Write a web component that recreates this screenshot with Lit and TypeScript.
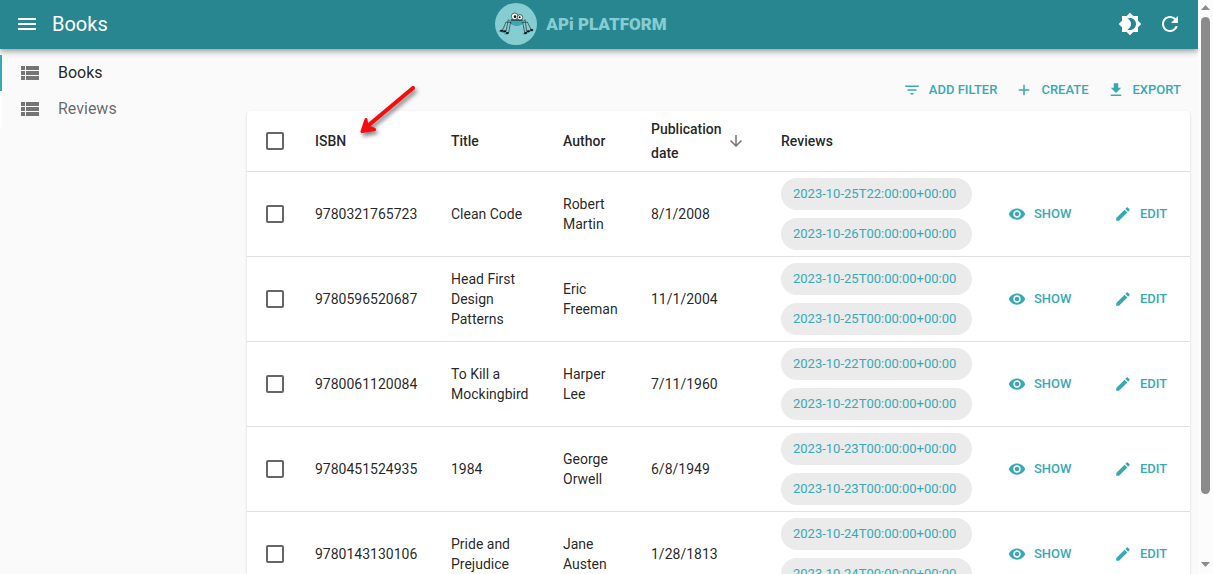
import { LitElement, html, css, svg } from "lit";
import { customElement, property } from "lit/decorators.js";

const ICONS: Record<string, string> = {
  menu: "M3 18h18v-2H3v2zm0-5h18v-2H3v2zm0-7v2h18V6H3z",
  theme:
    "M20 8.69V4h-4.69L12 .69 8.69 4H4v4.69L.69 12 4 15.31V20h4.69L12 23.31 15.31 20H20v-4.69L23.31 12 20 8.69zM12 18c-.89 0-1.74-.2-2.5-.55C11.56 16.5 13 14.42 13 12s-1.44-4.5-3.5-5.45C10.26 6.2 11.11 6 12 6c3.31 0 6 2.69 6 6s-2.69 6-6 6z",
  refresh:
    "M17.65 6.35C16.2 4.9 14.21 4 12 4c-4.42 0-7.99 3.58-7.99 8s3.57 8 7.99 8c3.73 0 6.84-2.55 7.73-6h-2.08c-.82 2.33-3.04 4-5.65 4-3.31 0-6-2.69-6-6s2.69-6 6-6c1.66 0 3.14.69 4.22 1.78L13 11h7V4l-2.35 2.35z",
  list: "M3 14h4v-4H3v4zm0 5h4v-4H3v4zM3 9h4V5H3v4zm5 5h13v-4H8v4zm0 5h13v-4H8v4zM8 5v4h13V5H8z",
  filter: "M10 18h4v-2h-4v2zM3 6v2h18V6H3zm3 7h12v-2H6v2z",
  add: "M19 13h-6v6h-2v-6H5v-2h6V5h2v6h6v2z",
  download: "M19 9h-4V3H9v6H5l7 7 7-7zM5 18v2h14v-2H5z",
  arrowDown: "M20 12l-1.41-1.41L13 16.17V4h-2v12.17l-5.58-5.59L4 12l8 8 8-8z",
  show: "M12 4.5C7 4.5 2.73 7.61 1 12c1.73 4.39 6 7.5 11 7.5s9.27-3.11 11-7.5c-1.73-4.39-6-7.5-11-7.5zM12 17c-2.76 0-5-2.24-5-5s2.24-5 5-5 5 2.24 5 5-2.24 5-5 5zm0-8c-1.66 0-3 1.34-3 3s1.34 3 3 3 3-1.34 3-3-1.34-3-3-3z",
  edit: "M3 17.25V21h3.75L17.81 9.94l-3.75-3.75L3 17.25zM20.71 7.04c.39-.39.39-1.02 0-1.41l-2.34-2.34c-.39-.39-1.02-.39-1.41 0l-1.83 1.83 3.75 3.75 1.83-1.83z",
};

const icon = (name: string, size: number) =>
  html`<svg class="icon" width=${size} height=${size} viewBox="0 0 24 24" aria-hidden="true">
    <path d=${ICONS[name]}></path>
  </svg>`;

interface Book {
  isbn: string;
  title: string;
  author: string;
  date: string;
  reviews: string[];
}

const BOOKS: Book[] = [
  {
    isbn: "9780321765723",
    title: "Clean Code",
    author: "Robert Martin",
    date: "8/1/2008",
    reviews: ["2023-10-25T22:00:00+00:00", "2023-10-26T00:00:00+00:00"],
  },
  {
    isbn: "9780596520687",
    title: "Head First Design Patterns",
    author: "Eric Freeman",
    date: "11/1/2004",
    reviews: ["2023-10-25T00:00:00+00:00", "2023-10-25T00:00:00+00:00"],
  },
  {
    isbn: "9780061120084",
    title: "To Kill a Mockingbird",
    author: "Harper Lee",
    date: "7/11/1960",
    reviews: ["2023-10-22T00:00:00+00:00", "2023-10-22T00:00:00+00:00"],
  },
  {
    isbn: "9780451524935",
    title: "1984",
    author: "George Orwell",
    date: "6/8/1949",
    reviews: ["2023-10-23T00:00:00+00:00", "2023-10-23T00:00:00+00:00"],
  },
  {
    isbn: "9780143130106",
    title: "Pride and Prejudice",
    author: "Jane Austen",
    date: "1/28/1813",
    reviews: ["2023-10-24T00:00:00+00:00", "2023-10-24T00:00:00+00:00"],
  },
];

const shared = css`
  * {
    box-sizing: border-box;
  }
  .icon {
    display: block;
    flex: none;
    fill: currentColor;
  }
  button {
    border: 0;
    background: none;
    font: inherit;
    color: inherit;
    cursor: pointer;
  }
  a {
    color: inherit;
    text-decoration: none;
  }
  .action {
    display: flex;
    align-items: center;
    gap: 8px;
    padding: 4px;
    border-radius: 4px;
    color: #38a9b4;
    font-size: 13px;
    line-height: 22px;
    font-weight: 500;
    text-transform: uppercase;
    white-space: nowrap;
  }
`;

@customElement("brand-logo")
export class BrandLogo extends LitElement {
  static styles = css`
    :host {
      display: flex;
      align-items: center;
      gap: 9px;
      color: #86cdd2;
    }
    svg {
      display: block;
    }
    .name {
      font-size: 17px;
      line-height: 24px;
      font-weight: 900;
      white-space: nowrap;
    }
  `;

  render() {
    const legs = [
      "M66 70L55 59L48 94",
      "M67 74L62 66L56 98",
      "M64 68L48 66L38 90",
      "M94 70L105 59L110 94",
      "M93 74L98 66L104 98",
      "M96 68L112 66L123 88",
    ];
    const feet: [number, number][] = [
      [35, 92],
      [44, 94],
      [52, 99],
      [107, 99],
      [115, 94],
      [125, 90],
    ];
    return html`
      <svg width="42" height="42" viewBox="15 9 126 126" aria-hidden="true">
        <circle cx="78" cy="72" r="63" fill="#86cdd2"></circle>
        ${feet.map(
          ([x, y]) => svg`<ellipse cx=${x - 3} cy=${y + 2} rx="6" ry="3" fill="#38a9b4"></ellipse>`
        )}
        ${legs.map(
          (d) => svg`<path d=${d} fill="none" stroke="#1c3336" stroke-width="2" stroke-linejoin="round"></path>`
        )}
        <path d="M62 60H98Q98 78 80 78Q63 78 62 60Z" fill="#38a9b4"></path>
        <path d="M62 60H98" stroke="#111" stroke-width="3"></path>
        ${feet.map(([x, y]) => svg`<ellipse cx=${x} cy=${y} rx="5" ry="3" fill="#111"></ellipse>`)}
        <circle cx="74" cy="49" r="10" fill="#fff" stroke="#222" stroke-width="2"></circle>
        <circle cx="90" cy="52" r="8" fill="#fff" stroke="#222" stroke-width="2"></circle>
        <circle cx="75" cy="50" r="4" fill="#111"></circle>
        <circle cx="89" cy="52" r="3" fill="#111"></circle>
      </svg>
      <span class="name">APi PLATFORM</span>
    `;
  }
}

@customElement("book-table")
export class BookTable extends LitElement {
  @property({ attribute: false }) books: Book[] = [];

  static styles = [
    shared,
    css`
      :host {
        display: block;
        border-radius: 4px;
        background: #fff;
        box-shadow: 0 2px 1px -1px rgba(0, 0, 0, 0.2), 0 1px 1px rgba(0, 0, 0, 0.14),
          0 1px 3px rgba(0, 0, 0, 0.12);
      }
      table {
        width: 100%;
        table-layout: fixed;
        border-collapse: separate;
        border-spacing: 0;
        color: rgba(0, 0, 0, 0.87);
        font-size: 14px;
        line-height: 20px;
      }
      .c-check {
        width: 52px;
      }
      .c-isbn {
        width: 136px;
      }
      .c-title {
        width: 112px;
      }
      .c-author {
        width: 88px;
      }
      .c-date {
        width: 130px;
      }
      .c-reviews {
        width: 223px;
      }
      .c-show {
        width: 106px;
      }
      .c-edit {
        width: 96px;
      }
      th,
      td {
        padding: 6px 16px;
        border-bottom: 1px solid #e0e0e0;
        text-align: left;
        vertical-align: middle;
      }
      th {
        font-weight: 500;
        line-height: 24px;
      }
      .check {
        padding: 0 0 0 19px;
      }
      input {
        display: block;
        appearance: none;
        width: 18px;
        height: 18px;
        margin: 0;
        border: 2px solid #666;
        border-radius: 2px;
        background: #fff;
      }
      .sort {
        display: flex;
        align-items: center;
        gap: 4px;
        padding: 0 4px 0 0;
        text-align: left;
      }
      .sort .icon {
        color: #757575;
      }
      .chips {
        display: flex;
        flex-direction: column;
        gap: 8px;
      }
      .chip {
        padding: 0 12px;
        border-radius: 16px;
        background: #ebebeb;
        color: #38a9b4;
        font-size: 13px;
        line-height: 32px;
        white-space: nowrap;
      }
    `,
  ];

  render() {
    return html`
      <table>
        <colgroup>
          ${["check", "isbn", "title", "author", "date", "reviews", "show", "edit"].map(
            (c) => html`<col class="c-${c}" />`
          )}
        </colgroup>
        <thead>
          <tr>
            <th class="check"><input type="checkbox" aria-label="Select all" /></th>
            <th>ISBN</th>
            <th>Title</th>
            <th>Author</th>
            <th>
              <button class="sort"><span>Publication date</span>${icon("arrowDown", 18)}</button>
            </th>
            <th>Reviews</th>
            <th></th>
            <th></th>
          </tr>
        </thead>
        <tbody>
          ${this.books.map(
            (b) => html`<tr>
              <td class="check"><input type="checkbox" aria-label="Select ${b.title}" /></td>
              <td>${b.isbn}</td>
              <td>${b.title}</td>
              <td>${b.author}</td>
              <td>${b.date}</td>
              <td>
                <div class="chips">${b.reviews.map((r) => html`<a class="chip" href="#">${r}</a>`)}</div>
              </td>
              <td><a class="action" href="#">${icon("show", 18)}Show</a></td>
              <td><a class="action" href="#">${icon("edit", 18)}Edit</a></td>
            </tr>`
          )}
        </tbody>
      </table>
    `;
  }
}

@customElement("app-root")
export class AppRoot extends LitElement {
  static styles = [
    shared,
    css`
      :host {
        position: relative;
        display: flex;
        height: 100vh;
        overflow: hidden;
        background: #fafafa;
        color: rgba(0, 0, 0, 0.87);
        font-family: Roboto, "Liberation Sans", sans-serif;
      }
      .page {
        flex: 1;
        min-width: 0;
        display: flex;
        flex-direction: column;
        overflow: hidden;
      }
      .bar {
        flex: none;
        display: flex;
        align-items: center;
        height: 49px;
        padding: 0 8px 1px 7px;
        background: #288690;
        color: #fff;
        box-shadow: 0 2px 4px -1px rgba(0, 0, 0, 0.2), 0 4px 5px rgba(0, 0, 0, 0.14),
          0 1px 10px rgba(0, 0, 0, 0.12);
        z-index: 1;
      }
      .round {
        padding: 8px;
        border-radius: 50%;
      }
      h1 {
        flex: 1;
        margin: 0;
        padding-left: 5px;
        font-size: 20px;
        line-height: 32px;
        font-weight: 400;
      }
      .spacer {
        flex: 1;
      }
      .body {
        display: flex;
        gap: 8px;
        padding-right: 8px;
      }
      nav {
        flex: none;
        width: 239px;
        padding-top: 6px;
      }
      .item {
        display: flex;
        align-items: center;
        gap: 16px;
        height: 36px;
        padding-left: 16px;
        border-left: 2px solid #fff;
        color: rgba(0, 0, 0, 0.6);
        font-size: 16px;
        line-height: 24px;
      }
      .item .icon {
        color: #757575;
      }
      .item.active {
        border-left-color: #38a9b4;
        color: rgba(0, 0, 0, 0.87);
      }
      main {
        flex: 1;
        min-width: 0;
      }
      .tools {
        display: flex;
        justify-content: flex-end;
        gap: 10px;
        padding: 26px 5px 6px 0;
      }
      .scroll {
        flex: none;
        display: flex;
        flex-direction: column;
        align-items: center;
        width: 15px;
        padding: 5px 0 7px;
        background: #fcfcfc;
        color: #8b8b8b;
      }
      .scroll svg {
        flex: none;
        fill: currentColor;
      }
      .track {
        flex: 1;
        padding: 7px 0 68px;
        display: flex;
      }
      .thumb {
        width: 9px;
        border-radius: 5px;
        background: currentColor;
      }
      .pointer {
        position: absolute;
        left: 352px;
        top: 80px;
        z-index: 2;
        pointer-events: none;
        filter: drop-shadow(2px 3px 2px rgba(0, 0, 0, 0.5));
      }
    `,
  ];

  render() {
    return html`
      <div class="page">
        <header class="bar">
          <button class="round" aria-label="Menu">${icon("menu", 24)}</button>
          <h1>Books</h1>
          <brand-logo></brand-logo>
          <div class="spacer"></div>
          <button class="round" aria-label="Toggle theme">${icon("theme", 24)}</button>
          <button class="round" aria-label="Refresh">${icon("refresh", 24)}</button>
        </header>
        <div class="body">
          <nav>
            <a class="item active" href="#">${icon("list", 24)}Books</a>
            <a class="item" href="#">${icon("list", 24)}Reviews</a>
          </nav>
          <main>
            <div class="tools">
              <button class="action">${icon("filter", 18)}Add filter</button>
              <button class="action">${icon("add", 18)}Create</button>
              <button class="action">${icon("download", 18)}Export</button>
            </div>
            <book-table .books=${BOOKS}></book-table>
          </main>
        </div>
      </div>
      <div class="scroll" aria-hidden="true">
        <svg width="9" height="5" viewBox="0 0 9 5"><path d="M0 5L4.5 0L9 5Z"></path></svg>
        <div class="track"><div class="thumb"></div></div>
        <svg width="9" height="5" viewBox="0 0 9 5"><path d="M0 0L4.5 5L9 0Z"></path></svg>
      </div>
      <svg class="pointer" width="68" height="60" viewBox="352 80 68 60" aria-hidden="true">
        <path d="M413 88L364 129" fill="none" stroke="#f80b0b" stroke-width="4" stroke-linecap="round"></path>
        <path
          d="M366 119.500L362 131.500L374.500 129.500L367 126.500Z"
          fill="#f80b0b"
          stroke="#f80b0b"
          stroke-width="3"
          stroke-linejoin="round"
        ></path>
      </svg>
    `;
  }
}
